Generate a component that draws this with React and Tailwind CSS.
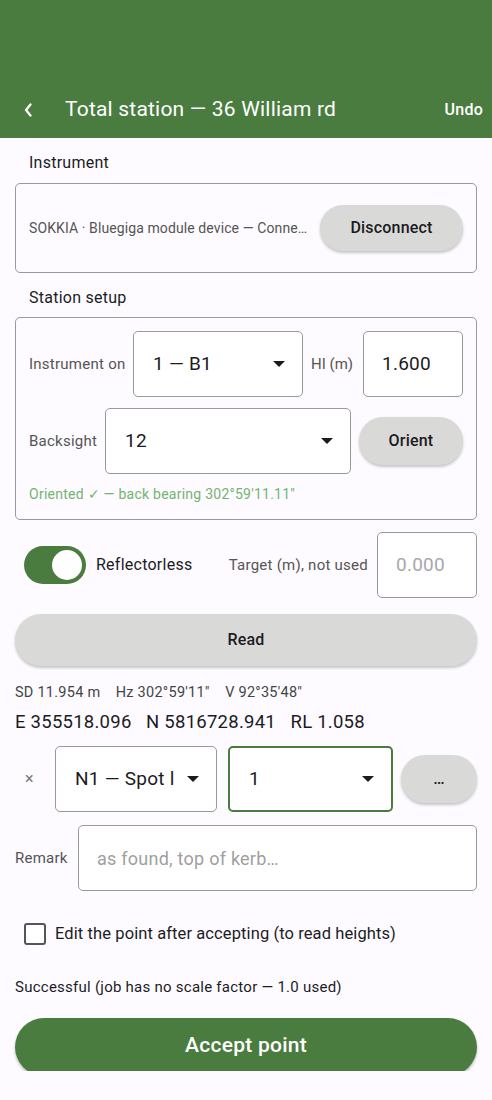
import React, { useState } from 'react';

const font = { fontFamily: 'Roboto, "Noto Sans", sans-serif' };

const Caret = () => (
  <svg width="12" height="6" viewBox="0 0 12 6" className="shrink-0">
    <path d="M0 0 L12 0 L6 6 Z" fill="#1c1b1f" />
  </svg>
);

const Select = ({ value, className = '', focused = false }) => (
  <div
    className={`flex shrink-0 items-center justify-between rounded-[5px] bg-white pl-[19px] pr-[17px] ${
      focused ? 'border-2 border-[#4a7c3f] pl-[18px] pr-[16px]' : 'border border-[#9a9a9a]'
    } ${className}`}
  >
    <span className="overflow-hidden whitespace-nowrap text-[19px] text-[#1c1b1f]">{value}</span>
    <Caret />
  </div>
);

const GrayButton = ({ children, className = '' }) => (
  <button
    className={`flex shrink-0 items-center justify-center rounded-full bg-[#d9dad8] text-[16px] font-medium tracking-[0.2px] text-[#1c1b1f] shadow-[0_2px_3px_rgba(0,0,0,0.22)] ${className}`}
  >
    {children}
  </button>
);

export default function App() {
  const [reflectorless, setReflectorless] = useState(true);
  const [editAfter, setEditAfter] = useState(false);

  return (
    <div className="relative h-[1100px] w-[492px] overflow-hidden bg-[#fdfbff] tracking-[0.25px]" style={font}>
      {/* Top bar */}
      <header className="flex h-[138px] items-end bg-[#4a7c3f]">
        <div className="flex h-[56px] w-full items-center pr-[9px]">
          <button className="flex w-[56px] items-center justify-center text-white">
            <svg width="10" height="16" viewBox="0 0 10 16">
              <path d="M7.5 2.5 L3 8 L7.5 13.5" stroke="white" strokeWidth="2.3" fill="none" strokeLinecap="round" strokeLinejoin="round" />
            </svg>
          </button>
          <h1 className="ml-[9px] flex-1 text-[21px] tracking-[0.2px] text-white">Total station — 36 William rd</h1>
          <span className="text-[16px] font-medium text-white">Undo</span>
        </div>
      </header>

      <div className="h-[933px] overflow-hidden px-[15px]">
        {/* Instrument */}
        <p className="pl-[14px] pt-[14px] text-[16px] leading-[22px] text-[#1c1b1f]">Instrument</p>
        <div className="mt-[9px] flex h-[90px] items-center justify-between rounded-[5px] border border-[#9a9a9a] pl-[13px] pr-[13px]">
          <span className="overflow-hidden whitespace-nowrap text-[14px] tracking-[0.1px] text-[#555555]">
            SOKKIA · Bluegiga module device — Conne…
          </span>
          <GrayButton className="h-[46px] w-[143px]">Disconnect</GrayButton>
        </div>

        {/* Station setup */}
        <p className="pl-[14px] pt-[14px] text-[16px] leading-[22px] text-[#1c1b1f]">Station setup</p>
        <div className="mt-[8px] flex h-[203px] flex-col rounded-[5px] border border-[#9a9a9a] px-[13px] pt-[13px]">
          <div className="flex h-[66px] items-center">
            <span className="w-[104px] shrink-0 whitespace-nowrap text-[15px] text-[#555555]">Instrument on</span>
            <Select value="1 — B1" className="h-[66px] w-[170px]" />
            <span className="ml-[8px] shrink-0 whitespace-nowrap text-[15px] tracking-normal text-[#555555]">HI (m)</span>
            <div className="ml-auto flex h-[66px] w-[100px] shrink-0 items-center rounded-[5px] border border-[#9a9a9a] bg-white pl-[18px] text-[19px] text-[#1c1b1f]">
              1.600
            </div>
          </div>
          <div className="mt-[11px] flex h-[66px] items-center">
            <span className="w-[76px] shrink-0 text-[15px] text-[#555555]">Backsight</span>
            <Select value="12" className="h-[66px] w-[246px]" />
            <GrayButton className="ml-[8px] h-[48px] w-[104px]">Orient</GrayButton>
          </div>
          <p className="mt-[10px] text-[14px] text-[#74b46f]">Oriented ✓ — back bearing 302°59'11.11"</p>
        </div>

        {/* Reflectorless / target */}
        <div className="mt-[12px] flex h-[66px] items-center">
          <button
            onClick={() => setReflectorless(!reflectorless)}
            className="ml-[9px] flex h-[38px] w-[62px] shrink-0 items-center justify-end rounded-full bg-[#4a7c3f] pr-[4px]"
          >
            <span className="h-[30px] w-[30px] rounded-full bg-white" />
          </button>
          <span className="ml-[10px] text-[16px] text-[#1c1b1f]">Reflectorless</span>
          <span className="ml-auto mr-[9px] text-[15px] text-[#555555]">Target (m), not used</span>
          <div className="flex h-[66px] w-[100px] shrink-0 items-center rounded-[5px] border border-[#9a9a9a] bg-white pl-[18px] text-[19px] text-[#a8a8a8]">
            0.000
          </div>
        </div>

        <GrayButton className="mt-[16px] h-[52px] w-full">Read</GrayButton>

        <p className="mt-[18px] whitespace-pre text-[14.5px] leading-[18px] text-[#444444]">
          {'SD 11.954 m    Hz 302°59\'11"    V 92°35\'48"'}
        </p>
        <p className="mt-[8px] whitespace-pre text-[18.5px] leading-[24px] text-[#1c1b1f]">
          {'E 355518.096   N 5816728.941   RL 1.058'}
        </p>

        {/* Point row */}
        <div className="mt-[12px] flex h-[66px] items-center">
          <span className="w-[40px] shrink-0 pl-[10px] text-[16px] text-[#777777]">×</span>
          <Select value="N1 — Spot l" className="h-[66px] w-[162px]" />
          <Select value="1" focused className="ml-[11px] h-[66px] w-[165px]" />
          <GrayButton className="ml-[8px] h-[48px] w-[76px] text-[14px]">…</GrayButton>
        </div>

        <div className="mt-[13px] flex h-[66px] items-center">
          <span className="w-[63px] shrink-0 text-[15px] text-[#555555]">Remark</span>
          <div className="flex h-[66px] flex-1 items-center rounded-[5px] border border-[#9a9a9a] bg-white pl-[18px] text-[18px] text-[#a0a0a0]">
            as found, top of kerb…
          </div>
        </div>

        <label className="mt-[31px] flex items-center">
          <button
            onClick={() => setEditAfter(!editAfter)}
            className="ml-[9px] h-[22px] w-[22px] shrink-0 rounded-[3px] border-2 border-[#555555] bg-white"
          />
          <span className="ml-[9px] text-[16.5px] tracking-[0.1px] text-[#1c1b1f]">Edit the point after accepting (to read heights)</span>
        </label>

        <p className="mt-[30px] text-[15px] leading-[20px] text-[#1c1b1f]">
          Successful (job has no scale factor — 1.0 used)
        </p>

        <button className="mt-[21px] flex h-[58px] w-full items-center justify-center rounded-full bg-[#4a7c3f] pb-[2px] text-[21px] font-medium text-white shadow-[0_2px_3px_rgba(0,0,0,0.25)]">
          Accept point
        </button>
      </div>
    </div>
  );
}
